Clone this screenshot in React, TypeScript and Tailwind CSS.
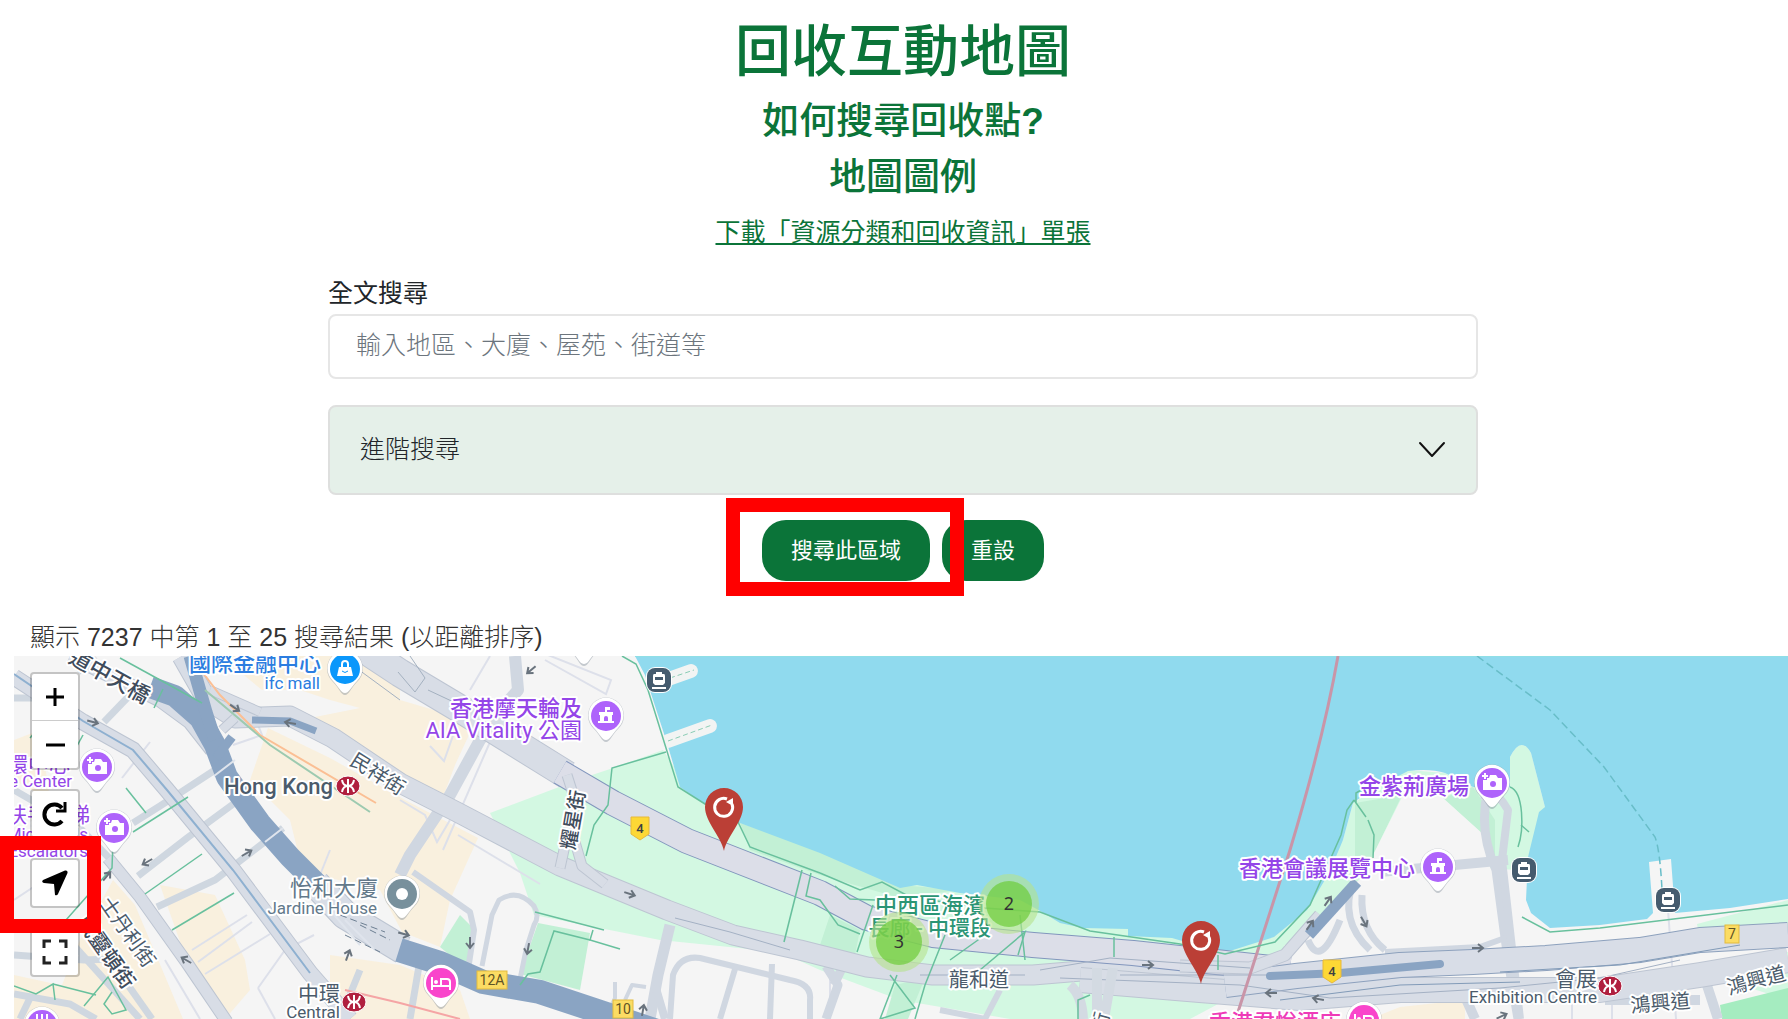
import type { ReactNode } from 'react'

type Pt = { x: number; y: number }

const roads = {
  local: [
    'M14 698H60', 'M95 656L78 672', 'M130 695L104 722', 'M133 823L160 806L218 768', 'M138 876L187 838L236 802',
    'M157 907L215 880L283 828', 'M14 955L84 960L112 959', 'M14 994L70 1004L96 1019', 'M30 998L20 1019',
    'M128 985L152 1019', 'M14 790L80 828L113 862', 'M60 930L140 1019', 'M360 970L340 1019', 'M410 1019L420 960',
  ],
  minor: [
    'M192 950L247 915', 'M198 962L252 922', 'M205 974L270 934', 'M258 988L285 950L314 935', 'M258 988L275 1019',
    'M165 960L200 1019', 'M122 778L150 742', 'M233 745L262 735L250 705', 'M14 900L44 880', 'M330 850L310 900',
    'M458 835L540 884', 'M443 850L490 742L515 700', 'M400 800L425 815L437 842L450 820', 'M530 760L544 745',
    'M545 660L606 694L611 680L548 655', 'M430 746L444 761L455 730', 'M830 1000V960', 'M1100 1019V990',
    'M1572 1019V985', 'M1612 1019V990', 'M1668 910L1676 1019', 'M470 690L490 656',
  ],
}

const paths = [
  'M55 1000L53 984L36 994L14 986', 'M53 984L96 995', 'M84 1006L108 977L126 1010L112 1014L104 1004L112 992',
  'M30 738L45 720', 'M83 735L72 755', 'M126 788L146 813', 'M133 832L188 797', 'M145 894L202 854', 'M172 930L234 893',
  'M113 840L112 868L66 920', 'M120 658L202 703', 'M163 689L154 708', 'M622 656L636 664L648 690L666 748L678 787L705 804L738 822L750 847L820 873',
  'M666 752L612 768L608 805L594 825L586 856', 'M535 912L604 930', 'M593 930L590 940L620 949', 'M590 940L554 931L540 972L528 974L520 985',
  'M802 870L784 942', 'M811 873L806 896L820 900L838 925L860 934', 'M820 873L860 890L882 882L910 897L985 908L1040 912L1090 931L1180 944L1225 954L1275 942L1310 905L1341 835L1347 810L1354 800',
  'M835 886L850 899L875 900', 'M1114 937V957', 'M1218 955V970', 'M873 905L857 952', 'M945 935L925 985L915 1019', 'M897 975L880 1019L915 1008L890 975',
  'M980 970L1025 932L1018 955', 'M985 935L950 960', 'M1020 915L1025 960', 'M1354 800L1366 817M1356 803L1356 793L1368 786', 'M1368 820L1374 835L1373 858',
  'M1510 787C1524 792 1524 830 1518 847', 'M1521 825L1529 832', 'M1522 917L1550 932L1600 928L1788 905', 'M1078 1019V1000L1090 995',
]

const arrows: [number, number, number][] = [
  [93, 722, 15], [235, 708, 35], [290, 723, 190], [247, 853, -30], [147, 862, 150], [107, 876, -50], [348, 955, -70],
  [186, 960, 210], [404, 934, 15], [531, 670, 140], [630, 894, 18], [470, 943, 90], [528, 949, 100], [643, 1010, -80],
  [1148, 965, 0], [1271, 993, 180], [1318, 999, 190], [1328, 901, -55], [1310, 925, -55], [1364, 922, 60], [1478, 948, 0], [1502, 1016, -25],
]

function Ribbon({ d, width, fill = '#d8dde6', edge = '#bdc5d2' }: { d: string; width: number; fill?: string; edge?: string }) {
  return (
    <g fill="none" strokeLinejoin="round">
      <path d={d} stroke={edge} strokeWidth={width + 2} />
      <path d={d} stroke={fill} strokeWidth={width} />
    </g>
  )
}

function MapLabel({
  x, y, children, color = '#4b5b6b', size = 21, anchor = 'end', rotate = 0, weight = 400,
}: Pt & { children: ReactNode; color?: string; size?: number; anchor?: 'start' | 'middle' | 'end'; rotate?: number; weight?: number }) {
  return (
    <text
      x={x} y={y} fill={color} fontSize={size} fontWeight={weight} textAnchor={anchor}
      stroke="#fff" strokeWidth={4} strokeLinejoin="round" paintOrder="stroke"
      transform={rotate ? `rotate(${rotate} ${x} ${y})` : undefined}
    >
      {children}
    </text>
  )
}

function PlacePin({ x, y, color, children }: Pt & { color: string; children: ReactNode }) {
  return (
    <g transform={`translate(${x} ${y})`}>
      <path d="M0 26C-4 26-6 19-12 13A18 18 0 1 1 12 13C6 19 4 26 0 26Z" fill="#7b8794" opacity=".4" />
      <path d="M0 24C-4 24-6 18-12 12A17.500 17.500 0 1 1 12 12C6 18 4 24 0 24Z" fill="#fff" />
      <circle r="15" fill={color} />
      {children}
    </g>
  )
}

function CameraGlyph() {
  return (
    <>
      <path d="M-9-3V7H10V-5H6L4-8H-2L-3-5H-5V-3Z" fill="#fff" />
      <circle cx="1" cy="1" r="3" fill="#ae63fb" />
      <path d="M-7-10V-4M-10-7H-4" stroke="#fff" strokeWidth="2" />
    </>
  )
}

function CastleGlyph() {
  return (
    <>
      <path d="M-1-4V-9H4V-6H1V-4H7V-1H6V5H8V7H-8V5H-6V-1H-7V-4Z" fill="#fff" />
      <path d="M-2 5V2A2 2 0 0 1 2 2V5Z" fill="#ae63fb" />
    </>
  )
}

function BedGlyph() {
  return (
    <g fill="none" stroke="#fff" strokeWidth="2">
      <path d="M-9-6V7M-9 3H9M9 7V-1Q9-4 6-4H0V3" />
      <circle cx="-5" cy="-1" r="2" fill="#fff" stroke="none" />
    </g>
  )
}

function Mtr({ x, y }: Pt) {
  return (
    <g transform={`translate(${x} ${y})`}>
      <ellipse rx="12" ry="10" fill="#b01f3e" stroke="#fff" strokeWidth="1" />
      <path d="M0-7V7M-6-6Q-5 0 0 0Q5 0 6-6M-6 6Q-5 0 0 0Q5 0 6 6" fill="none" stroke="#fff" strokeWidth="2" />
    </g>
  )
}

function Ferry({ x, y }: Pt) {
  return (
    <g transform={`translate(${x} ${y})`}>
      <rect x="-13" y="-13" width="26" height="26" rx="9" fill="#fff" />
      <rect x="-12" y="-12" width="24" height="24" rx="8" fill="#455b6e" />
      <path d="M-3-8H3V-6H5Q6-6 6-4V3L4 5H-4L-6 3V-4Q-6-6-5-6H-3Z" fill="#fff" />
      <path d="M-4-3H4V0H-4Z" fill="#455b6e" />
      <path d="M-7 8H7" stroke="#fff" strokeWidth="2" />
    </g>
  )
}

function Shield({ x, y, children }: Pt & { children: ReactNode }) {
  return (
    <g transform={`translate(${x} ${y})`}>
      <path d="M-9-11H9V6L0 12L-9 6Z" fill="#fdd835" stroke="#e8b93a" strokeWidth="1" />
      <text y="5" fontSize="13" textAnchor="middle" fill="#3c4043" fontWeight="500">{children}</text>
    </g>
  )
}

function RouteBadge({ x, y, w, children }: Pt & { w: number; children: ReactNode }) {
  return (
    <g transform={`translate(${x} ${y})`}>
      <rect x={-w / 2} y="-9" width={w} height="18" fill="#fbdc63" stroke="#e3bb3e" strokeWidth="1" />
      <text y="5" fontSize="14" textAnchor="middle" fill="#5f5325">{children}</text>
    </g>
  )
}

function RecyclePin({ x, y }: Pt) {
  return (
    <g transform={`translate(${x} ${y})`}>
      <path d="M0 43C-3 28-19 14-19-1A19 19 0 1 1 19-1C19 14 3 28 0 43Z" fill="#bb3f36" />
      <path d="M3-9A9 9 0 1 0 8-4" fill="none" stroke="#fff" strokeWidth="3" />
      <path d="M2-6L9-10V-2Z" fill="#fff" />
    </g>
  )
}

function Cluster({ x, y, children }: Pt & { children: ReactNode }) {
  return (
    <g transform={`translate(${x} ${y})`}>
      <circle r="30" fill="#b5e28c" fillOpacity=".6" />
      <circle r="23" fill="#6ecc39" fillOpacity=".7" />
      <text y="6" fontSize="18" textAnchor="middle" fill="#333" fontFamily="Noto Sans">{children}</text>
    </g>
  )
}

function MapCanvas() {
  return (
    <svg
      className="absolute inset-0 h-full w-full font-['Roboto','Noto_Sans_CJK_TC',sans-serif]"
      viewBox="14 656 1774 363"
      preserveAspectRatio="xMinYMin slice"
      role="img"
      aria-label="地圖"
    >
      <rect x="0" y="600" width="1800" height="440" fill="#f5f5f5" />

      {/* built-up blocks */}
      <g fill="#f9f0de">
        <path d="M228 656H375L400 680V700L375 712L330 700L300 690L262 690L240 672Z" />
        <path d="M380 656L400 700L475 722L455 765L442 800L400 775L340 745L300 720L400 700Z" />
        <path d="M268 728L330 758L405 800L478 838L450 900L440 947L402 932L380 890L330 878L300 860L290 820L250 780Z" />
        <path d="M113 880L135 905L183 1019H100L62 985L80 940Z" />
        <path d="M160 885L215 895L245 960L250 990L225 1019L190 970Z" />
        <path d="M14 975L60 985L120 1000L130 1019H14Z" />
        <path d="M14 740L40 730L50 800L14 780Z" />
        <path d="M330 955L400 965L460 990L470 1019H330Z" />
        <path d="M1400 1007L1465 1000V1019H1370Z" />
      </g>

      {/* parks */}
      <g fill="#d3f8e2">
        <path d="M663 750L613 768L583 778L490 813L520 873L534 915L660 940L780 952L820 970L900 1000L1010 1019H1190L1235 995L1290 985L1280 920L1060 905L900 875L740 815L690 790Z" />
        <path d="M1225 950L1300 915L1343 840L1353 803L1408 770L1445 773L1473 787L1510 787V757Q1521 735 1531 753L1545 807L1528 857L1515 870L1380 860L1290 945Z" />
        <path d="M1697 924L1788 900V945L1700 940Z" />
        <path d="M1718 965L1788 952V1000L1725 980Z" />
      </g>
      <g fill="#c2f0d5">
        <path d="M538 923L590 933L580 990L520 974Z" />
        <path d="M460 915L472 927L468 970L440 947Z" />
        <path d="M740 823L820 850L900 885L960 890L900 898L820 875L750 850Z" />
        <path d="M830 915L860 930L855 955L820 945Z" />
        <path d="M895 985L925 978L908 1019H885Z" />
        <path d="M1355 803L1402 795L1378 845L1373 858H1355Z" />
        <path d="M1443 798L1473 787L1495 820V857L1488 855L1484 835Z" />
        <path d="M1720 1005L1788 988V1019H1722Z" fill="#a5ecc0" />
      </g>
      <path d="M1402 797L1420 788L1443 798L1484 835L1490 860V950L1380 952L1320 955L1350 900L1378 845Z" fill="#f5f5f5" />

      {/* harbour */}
      <path
        d="M635 656L645 675L667 743L680 787L703 803L740 823L820 853L900 888L917 885L960 893L1020 900L1042 912L1060 923L1083 928L1128 929V936L1172 938L1220 952L1233 950L1274 937L1307 910L1329 873L1343 840L1353 803L1368 792L1408 771Q1430 768 1445 773L1473 787H1510V757Q1521 735 1531 753L1545 807L1539 812L1528 857L1526 900L1531 913L1550 928L1600 925L1647 919L1653 913L1649 862L1671 859L1675 913L1730 908L1788 899V656Z"
        fill="#90daee"
      />
      <path d="M635 656H1788" stroke="#8fdfe6" strokeWidth="2" />
      <g stroke="#f2f4f3" strokeWidth="14" strokeLinecap="round">
        <path d="M660 682L691 671" />
        <path d="M668 741L710 726" />
      </g>
      <g stroke="#8bcdb5" strokeWidth="1" strokeDasharray="5 3">
        <path d="M670 678L694 670" />
        <path d="M668 741L712 725" />
      </g>

      {/* streets */}
      <g fill="none" stroke="#dde0ea" strokeWidth="2">
        {roads.minor.map((d) => <path key={d} d={d} />)}
      </g>
      <g fill="none" stroke="#cfd7e0" strokeWidth="7">
        {roads.local.map((d) => <path key={d} d={d} />)}
      </g>
      <g fill="none" stroke="#d0d7e1" strokeWidth="6" strokeLinejoin="round">
        <path d="M482 966L492 915L499 900Q518 888 534 906Q540 916 534 925L526 950L519 984" strokeWidth="5" />
        <path d="M413 872L470 912L474 930L468 970" />
        <path d="M515 656L518 690L505 705L480 740L450 795L410 855L400 875" strokeWidth="12" />
        <path d="M670 925L658 975L650 1019" strokeWidth="11" />
        <path d="M655 985L665 1019" strokeWidth="8" />
        <path d="M670 1019L673 975Q680 955 700 958L790 980Q812 984 810 1000V1019" />
        <path d="M735 969L720 1019M772 964L770 1019" />
        <path d="M605 1019L615 998V982M625 1000L632 985L646 987" strokeWidth="4" />
        <path d="M826 966L838 985L826 1019M842 968L834 985" strokeWidth="9" />
        <path d="M1000 990L985 1019M940 1010L985 1019" />
        <path d="M1488 790Q1478 830 1496 870L1508 960L1518 1019" strokeWidth="9" />
        <path d="M1484 800Q1490 780 1508 810L1502 860L1520 1019" strokeWidth="8" />
        <path d="M1380 872L1508 860" strokeWidth="10" />
        <path d="M1354 880Q1338 920 1370 950M1362 895Q1360 930 1385 950M1340 920Q1320 970 1308 940" strokeWidth="7" />
        <path d="M1385 952L1480 947L1505 938" />
        <path d="M1462 990L1475 1019M1605 1000L1700 1000M1702 970L1718 1019" strokeWidth="10" />
      </g>

      <Ribbon d="M14 677L83 722L133 750L167 790L233 870L310 973L350 1019" width={15} />
      <path d="M14 674L83 721L133 750L167 790L233 870L310 973" fill="none" stroke="#8eb0d0" strokeWidth="2" />
      <Ribbon d="M108 858L140 897L187 963L227 1022" width={11} />
      <Ribbon d="M70 656L160 700L190 722L212 750" width={13} />
      <Ribbon d="M182 656L207 700L235 718L290 716L333 738L400 783L457 812L560 866L667 910L733 935L800 950L867 967L933 975L1033 975L1093 970L1167 974L1280 987" width={19} />
      <Ribbon d="M235 718L222 730M260 712L210 690" width={8} />
      <Ribbon d="M350 640L400 673L467 713L567 775" width={27} />
      <path d="M340 656L400 700M410 656L425 678L415 692L398 672M428 690L460 705" fill="none" stroke="#a4b1c0" strokeWidth="1" />
      <Ribbon d="M560 772L613 803L687 841L820 893L867 918L933 935L1033 945L1133 953L1290 970" width={24} fill="#dcdee8" edge="#8296bd" />
      <Ribbon d="M567 775L575 800L560 868M575 842L582 866L605 884" width={9} />
      <Ribbon d="M1080 980L1200 990L1300 998L1400 990L1500 990L1600 990L1700 975L1788 960" width={24} />
      <Ribbon d="M1225 985L1296 976L1400 965L1473 962L1546 958L1640 950L1700 940L1788 935" width={24} fill="#d8dde7" edge="#8da1bd" />
      <Ribbon d="M1180 966L1250 968L1285 955L1320 915" width={11} />
      <g fill="none" stroke="#a4b1c4" strokeWidth="1">
        <path d="M675 918L730 932L790 950M1040 970L1110 958L1250 968" />
        <path d="M1060 978L1240 985L1330 998L1500 988L1600 978L1680 960" />
        <path d="M1280 1000L1400 985L1520 982M1500 972L1620 965L1710 950L1740 945" stroke="#829bb8" />
        <path d="M920 975H1025M1120 975H1280" />
      </g>
      <g stroke="#d3dae2" strokeWidth="10" fill="none">
        <path d="M1097 968V1019M1113 968L1104 1019M1070 985Q1082 995 1083 1019" />
      </g>

      {/* tunnels */}
      <g fill="none" stroke="#8aa4c3">
        <path d="M150 687L175 696L200 718L215 745L227 777L260 823L290 857L318 885" strokeWidth="22" strokeLinejoin="round" />
        <path d="M190 656L206 712L215 740" strokeWidth="13" />
        <path d="M216 758L232 737" strokeWidth="9" />
        <path d="M252 720L290 721L316 731" strokeWidth="7" />
      </g>
      <Ribbon d="M316 884L345 915L403 950" width={27} />
      <path d="M399 950L440 963L483 982L540 992L600 1012L660 1032" fill="none" stroke="#8aa4c3" strokeWidth="24" />
      <path d="M1309 935L1357 882" stroke="#8aa4c3" strokeWidth="11" />
      <path d="M1440 964L1340 973L1270 976" fill="none" stroke="#8aa4c3" strokeWidth="8" strokeLinecap="round" />
      <g stroke="#dfe4ec" strokeWidth="2">
        <path d="M214 776L235 760M265 842L283 828M345 920L375 950M330 910L360 945" />
      </g>
      <path d="M340 915L385 932M345 935L380 952M360 925L390 940" stroke="#6d7f92" strokeWidth="1" strokeDasharray="7 4" />

      {/* rail lines, footpaths and ferry route */}
      <g fill="none" strokeWidth="2">
        <path d="M190 656L220 695L260 735L376 803" stroke="#fbbf94" />
        <path d="M205 690L270 745L370 812" stroke="#9dcab0" />
        <path d="M345 990L400 1003L460 1019" stroke="#f5a5a5" />
        <path d="M1338 656C1325 730 1305 800 1290 850L1238 1012" stroke="#c995a8" strokeWidth="3" />
        <path d="M1477 656L1550 710L1604 767L1655 837Q1660 850 1662 890" stroke="#68bdc8" strokeWidth="1.500" strokeDasharray="8 4" />
      </g>
      <g fill="none" stroke="#68c09d" strokeWidth="1.500">
        {paths.map((d) => <path key={d} d={d} />)}
      </g>
      <g fill="none" stroke="#69737d" strokeWidth="2">
        {arrows.map(([x, y, r]) => (
          <path key={`${x}-${y}`} d="M-6 0H5M0-4L5 0L0 4" transform={`translate(${x} ${y}) rotate(${r})`} />
        ))}
      </g>

      {/* street names */}
      <MapLabel x={106} y={683} rotate={29} anchor="middle" color="#3f4c5c" weight={500} size={22}>道中天橋</MapLabel>
      <MapLabel x={374} y={780} rotate={32} anchor="middle" size={20}>民祥街</MapLabel>
      <MapLabel x={122} y={936} rotate={55} anchor="middle" size={20}>士丹利街</MapLabel>
      <MapLabel x={100} y={956} rotate={55} anchor="middle" size={21} color="#3f4c5c" weight={500}>威靈頓街</MapLabel>
      <MapLabel x={580} y={821} rotate={-80} anchor="middle" size={20} color="#3f4c5c" weight={500}>耀星街</MapLabel>
      <MapLabel x={1009} y={987} size={20}>龍和道</MapLabel>
      <MapLabel x={1107} y={1024} rotate={-75} anchor="middle" size={20}>街</MapLabel>
      <MapLabel x={1661} y={1010} rotate={-5} anchor="middle" size={20}>鴻興道</MapLabel>
      <MapLabel x={1758} y={987} rotate={-15} anchor="middle" size={20}>鴻興道</MapLabel>

      {/* places */}
      <MapLabel x={321} y={671} color="#2b7de0" size={22} weight={500}>國際金融中心</MapLabel>
      <MapLabel x={320} y={689} color="#2b7de0" size={17}>ifc mall</MapLabel>
      <MapLabel x={582} y={716} color="#9445e8" size={22} weight={500}>香港摩天輪及</MapLabel>
      <MapLabel x={582} y={738} color="#9445e8" size={22}>AIA Vitality 公園</MapLabel>
      <MapLabel x={333} y={794} size={22} weight={500}>Hong Kong</MapLabel>
      <MapLabel x={378} y={896} color="#63798a" size={22}>怡和大廈</MapLabel>
      <MapLabel x={377} y={914} color="#63798a" size={17}>Jardine House</MapLabel>
      <MapLabel x={340} y={1001} size={21}>中環</MapLabel>
      <MapLabel x={340} y={1018} size={17}>Central</MapLabel>
      <MapLabel x={70} y={772} color="#9445e8">中環中心</MapLabel>
      <MapLabel x={72} y={787} color="#9445e8" size={17}>The Center</MapLabel>
      <MapLabel x={90} y={822} color="#9445e8">扶手電梯</MapLabel>
      <MapLabel x={88} y={840} color="#9445e8" size={17}>Mid-Levels</MapLabel>
      <MapLabel x={88} y={857} color="#9445e8" size={17}>Escalators</MapLabel>
      <MapLabel x={985} y={913} color="#2b9575" size={22} weight={500}>中西區海濱</MapLabel>
      <MapLabel x={991} y={935} color="#2b9575" size={21} weight={500}>長廊 - 中環段</MapLabel>
      <MapLabel x={1469} y={794} color="#9445e8" size={22} weight={500}>金紫荊廣場</MapLabel>
      <MapLabel x={1415} y={876} color="#9445e8" size={22} weight={500}>香港會議展覽中心</MapLabel>
      <MapLabel x={1597} y={986} size={21}>會展</MapLabel>
      <MapLabel x={1597} y={1003} size={17}>Exhibition Centre</MapLabel>
      <MapLabel x={1341} y={1030} color="#ee3bb8" size={22} weight={500}>香港君悅酒店</MapLabel>

      <Mtr x={348} y={786} />
      <Mtr x={354} y={1002} />
      <Mtr x={1610} y={986} />
      <Ferry x={659} y={680} />
      <Ferry x={1524} y={870} />
      <Ferry x={1668} y={900} />
      <Shield x={640} y={828}>4</Shield>
      <Shield x={1332} y={971}>4</Shield>
      <RouteBadge x={492} y={980} w={30}>12A</RouteBadge>
      <RouteBadge x={623} y={1009} w={20}>10</RouteBadge>
      <RouteBadge x={1732} y={934} w={14}>7</RouteBadge>

      <PlacePin x={345} y={669} color="#0a97fb">
        <path d="M-6-2H6L8 7H-8Z" fill="#fff" />
        <path d="M-3-2V-5A3 3 0 0 1 3-5V-2" fill="none" stroke="#fff" strokeWidth="2" />
        <path d="M-3 2Q0 5 3 2" fill="none" stroke="#0a97fb" strokeWidth="1" />
      </PlacePin>
      <PlacePin x={584} y={640} color="#78909c">{null}</PlacePin>
      <PlacePin x={97} y={767} color="#ae63fb"><CameraGlyph /></PlacePin>
      <PlacePin x={114} y={828} color="#ae63fb"><CameraGlyph /></PlacePin>
      <PlacePin x={42} y={1025} color="#ae63fb">
        <path d="M-5-11V-4M0-11V-4M5-11V-4M-6-5H6" stroke="#fff" strokeWidth="2" />
      </PlacePin>
      <PlacePin x={606} y={716} color="#ae63fb"><CastleGlyph /></PlacePin>
      <PlacePin x={402} y={894} color="#78909c"><circle r="6" fill="#fff" /></PlacePin>
      <PlacePin x={441} y={983} color="#f945cb"><BedGlyph /></PlacePin>
      <PlacePin x={1492} y={783} color="#ae63fb"><CameraGlyph /></PlacePin>
      <PlacePin x={1438} y={867} color="#ae63fb"><CastleGlyph /></PlacePin>
      <PlacePin x={1364} y={1020} color="#f945cb"><BedGlyph /></PlacePin>

      <Cluster x={1009} y={904}>2</Cluster>
      <Cluster x={899} y={942}>3</Cluster>
      <RecyclePin x={724} y={808} />
      <RecyclePin x={1201} y={941} />
    </svg>
  )
}

const box = 'rounded border-2 border-black/20 bg-white bg-clip-padding'
const control = `${box} flex h-[50px] w-[50px] items-center justify-center`

function MapControls() {
  return (
    <div className="absolute left-4 top-4 flex flex-col gap-[19px] text-black">
      <div className={`${box} flex w-[50px] flex-col`}>
        <button type="button" aria-label="放大" className="flex h-[47px] items-center justify-center border-b border-[#ccc]">
          <svg width="20" height="20" viewBox="0 0 20 20" stroke="currentColor" strokeWidth="3"><path d="M10 1V19M1 10H19" /></svg>
        </button>
        <button type="button" aria-label="縮小" className="flex h-[47px] items-center justify-center">
          <svg width="20" height="20" viewBox="0 0 20 20" stroke="currentColor" strokeWidth="3"><path d="M1 10H20" /></svg>
        </button>
      </div>
      <button type="button" aria-label="重新整理" className={control}>
        <svg width="28" height="28" viewBox="0 0 28 28" fill="none" stroke="currentColor" strokeWidth="4">
          <path d="M21 8A10 10 0 1 0 21 21" />
          <path d="M24 2V11H15" strokeWidth="3" />
        </svg>
      </button>
      <div className="relative">
        <button type="button" aria-label="我的位置" className={control}>
          <svg width="28" height="28" viewBox="0 0 28 28" fill="currentColor">
            <path d="M24 1.500Q27 1 26.500 4L17 25Q16 27 14 26L13 15L3 14Q0 13 2 11Z" />
          </svg>
        </button>
        <div className="pointer-events-none absolute -left-[30px] -top-[22px] h-[97px] w-[101px] border-[14px] border-[#ff0000]" />
      </div>
      <button type="button" aria-label="全螢幕" className={control}>
        <svg width="26" height="26" viewBox="0 0 26 26" fill="none" stroke="#222" strokeWidth="3">
          <path d="M2 9V2H9M17 2H24V9M24 17V24H17M9 24H2V17" />
        </svg>
      </button>
    </div>
  )
}

export default function App() {
  return (
    <main className="flex min-h-screen flex-col overflow-hidden bg-white pl-[14px] font-['Liberation_Sans','Noto_Sans_CJK_TC',sans-serif] text-[25px] text-[#212529]">
      <header className="pl-1 pt-3 text-center font-medium text-[#0b7439]">
        <h1 className="mb-0.5 text-[56px] leading-[80px]">回收互動地圖</h1>
        <h2 className="text-[37px] leading-[56px]">如何搜尋回收點<span className="font-bold">?</span></h2>
        <h2 className="text-[37px] leading-[56px]">地圖圖例</h2>
        <p className="font-normal leading-[52px]">
          <a href="#leaflet" className="underline decoration-2 underline-offset-2">下載「資源分類和回收資訊」單張</a>
        </p>
      </header>

      <form className="pl-1 pt-3.5" onSubmit={(e) => e.preventDefault()}>
        <div className="mx-auto flex max-w-[1150px] flex-col">
          <label htmlFor="keyword" className="leading-[42px]">全文搜尋</label>
          <input
            id="keyword"
            type="text"
            placeholder="輸入地區、大廈、屋苑、街道等"
            className="h-[65px] w-full rounded-lg border-2 border-[#e6e6e6] px-[26px] pb-0.5 font-light placeholder:text-[#6c757d]"
          />
          <button type="button" className="mt-[26px] flex h-[90px] items-center justify-between rounded-lg border-2 border-[#dedfde] bg-[#e5f0e9] px-[30px] text-left font-light">
            進階搜尋
            <svg width="28" height="18" viewBox="0 0 28 18" fill="none" stroke="#111" strokeWidth="2" strokeLinecap="round" strokeLinejoin="round">
              <path d="M2 2L14 15L26 2" />
            </svg>
          </button>
        </div>
        <div className="mt-[25px] flex justify-center gap-3 text-[22px] text-white">
          <div className="relative">
            <button type="submit" className="h-[61px] rounded-3xl bg-[#0b7439] px-[29px]">搜尋此區域</button>
            <div className="pointer-events-none absolute -left-9 -top-[22px] z-10 h-[98px] w-[238px] border-[14px] border-[#ff0000]" />
          </div>
          <button type="reset" className="h-[61px] rounded-3xl bg-[#0b7439] px-[29px]">重設</button>
        </div>
      </form>

      <p className="mt-[37px] px-4 font-light leading-[38px] text-[#333]">顯示 7237 中第 1 至 25 搜尋結果 (以距離排序)</p>

      <section className="relative min-h-[363px] flex-1">
        <MapCanvas />
        <MapControls />
      </section>
    </main>
  )
}
